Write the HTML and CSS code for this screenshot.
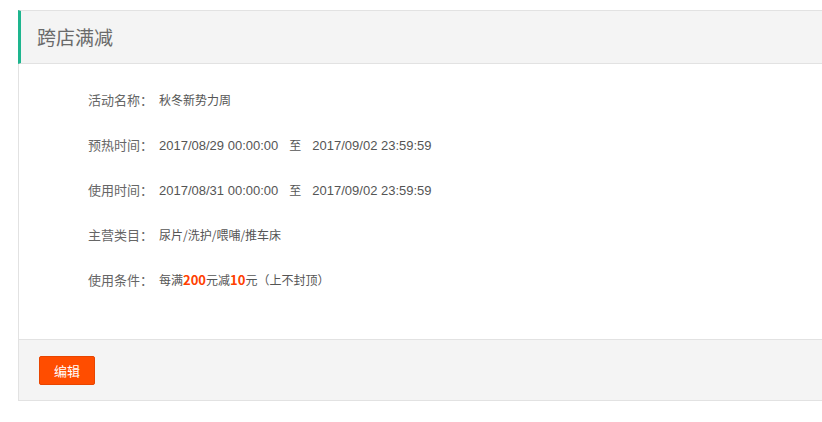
FILE: index.html
```html
<!DOCTYPE html>
<html lang="zh-CN">
<head>
<meta charset="utf-8">
<title>跨店满减</title>
<link rel="stylesheet" href="styles.css">
</head>
<body>
<div class="panel">
  <div class="panel-head">
    <h2 class="panel-title">跨店满减</h2>
  </div>
  <div class="panel-body">
    <div class="row"><span class="label">活动名称：</span><span class="value">秋冬新势力周</span></div>
    <div class="row"><span class="label">预热时间：</span><span class="value"><span class="date">2017/08/29 00:00:00</span><span class="to">至</span><span class="date">2017/09/02 23:59:59</span></span></div>
    <div class="row"><span class="label">使用时间：</span><span class="value"><span class="date">2017/08/31 00:00:00</span><span class="to">至</span><span class="date">2017/09/02 23:59:59</span></span></div>
    <div class="row"><span class="label">主营类目：</span><span class="value">尿片/洗护/喂哺/推车床</span></div>
    <div class="row"><span class="label">使用条件：</span><span class="value">每满<b class="num">200</b>元减<b class="num">10</b>元（上不封顶）</span></div>
  </div>
  <div class="panel-foot">
    <button class="btn">编辑</button>
  </div>
</div>
</body>
</html>
```
FILE: styles.css
```css
html, body {
  margin: 0;
  padding: 0;
  overflow: hidden;
  background: #fff;
  font-family: "Microsoft YaHei", "Noto Sans CJK SC", "Liberation Sans", sans-serif;
}
.panel {
  margin: 10px 0 0 18px;
  width: 840px;
}
.panel-head {
  height: 52px;
  background: #f4f4f4;
  border-top: 1px solid #e2e2e2;
  border-bottom: 1px solid #e2e2e2;
  border-left: 3px solid #1eb58e;
  display: flex;
  align-items: center;
  padding-left: 16px;
}
.panel-title {
  margin: 0 0 2px;
  font-size: 19px;
  font-weight: normal;
  color: #6a6a6a;
}
.panel-body {
  border-left: 1px solid #e2e2e2;
  padding: 13px 0 37px 69px;
}
.row {
  height: 45px;
  display: flex;
  align-items: center;
  font-size: 12px;
}
.label {
  width: 71px;
  font-size: 13px;
  color: #666;
}
.value {
  color: #555;
  font-size: 12px;
}
.date {
  font-family: "Liberation Sans", "Noto Sans CJK SC", sans-serif;
  font-size: 13px;
}
.to {
  margin: 0 11px;
}
.num {
  color: #ff4000;
  font-size: 13px;
}
.panel-foot {
  background: #f4f4f4;
  border: 1px solid #e2e2e2;
  border-right: none;
  padding: 16px 0 0 20px;
  box-sizing: border-box;
  height: 62px;
}
.btn {
  width: 56px;
  height: 29px;
  background: #ff4d00;
  border: 1px solid #e84500;
  border-radius: 2px;
  color: #fff;
  font-family: inherit;
  font-size: 13px;
  padding: 0;
}
```
